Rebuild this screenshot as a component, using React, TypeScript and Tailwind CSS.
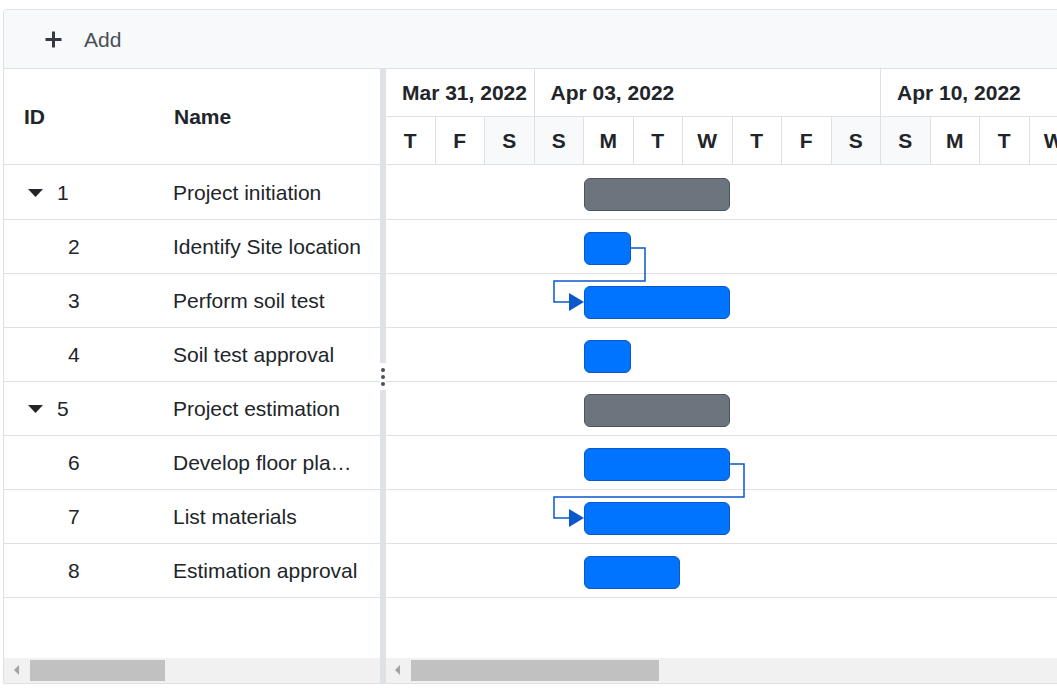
import { Fragment } from 'react'

type Task = { id: number; name: string; parent?: boolean; start: number; days: number }

const DAY = 49.5

const TASKS: Task[] = [
  { id: 1, name: 'Project initiation', parent: true, start: 4, days: 3 },
  { id: 2, name: 'Identify Site location', start: 4, days: 1 },
  { id: 3, name: 'Perform soil test', start: 4, days: 3 },
  { id: 4, name: 'Soil test approval', start: 4, days: 1 },
  { id: 5, name: 'Project estimation', parent: true, start: 4, days: 3 },
  { id: 6, name: 'Develop floor plan for estimation', start: 4, days: 3 },
  { id: 7, name: 'List materials', start: 4, days: 3 },
  { id: 8, name: 'Estimation approval', start: 4, days: 2 },
]

const FULL_WEEK = ['S', 'M', 'T', 'W', 'T', 'F', 'S']

const WEEKS = [
  { label: 'Mar 31, 2022', days: ['T', 'F', 'S'], weekend: [2] },
  { label: 'Apr 03, 2022', days: FULL_WEEK, weekend: [0, 6] },
  { label: 'Apr 10, 2022', days: FULL_WEEK, weekend: [0, 6] },
  { label: 'Apr 17, 2022', days: FULL_WEEK, weekend: [0, 6] },
]

function ScrollBar({ arrowLeft, thumbLeft, thumbWidth }: { arrowLeft: number; thumbLeft: number; thumbWidth: number }) {
  return (
    <div className="relative h-[25px] shrink-0 bg-[#f1f1f1]">
      <div
        className="absolute top-[7px] w-0 h-0 border-y-[5px] border-y-transparent border-r-[5px] border-r-[#a3a3a3]"
        style={{ left: arrowLeft }}
      />
      <div className="absolute top-[2px] h-[21px] bg-[#c1c1c1]" style={{ left: thumbLeft, width: thumbWidth }} />
    </div>
  )
}

export default function App() {
  return (
    <div className="w-[1057px] h-[691px] overflow-hidden bg-white pt-[9px] pl-[3px] font-['Liberation_Sans',Arial,sans-serif] text-[#212529]">
      <div className="w-[1140px] h-[675px] border border-[#dee2e6] rounded-t-[4px] flex flex-col overflow-hidden">
        {/* toolbar */}
        <div className="h-[59px] shrink-0 bg-[#f8f9fa] border-b border-[#dee2e6] flex items-center pl-[41px] pt-[1px]">
          <svg width="17" height="17" viewBox="0 0 17 17" className="shrink-0">
            <path d="M8.5 0.5v16M0.5 8.5h16" stroke="#343a40" strokeWidth="3" />
          </svg>
          <span className="ml-[22px] text-[21px] text-[#495057]">Add</span>
        </div>

        <div className="flex-1 flex min-h-0">
          {/* grid */}
          <div className="w-[376px] shrink-0 flex flex-col">
            <div className="h-[96px] shrink-0 border-b border-[#dee2e6] flex items-center text-[21px] font-bold">
              <div className="w-[150px] pl-[20px]">ID</div>
              <div className="pl-[20px]">Name</div>
            </div>
            <div className="pt-[1px]">
              {TASKS.map((t) => (
                <div key={t.id} className="h-[54px] border-b border-[#dee2e6] flex items-center text-[21px]">
                  <div className="w-[150px] shrink-0 flex items-center">
                    {t.parent ? (
                      <>
                        <svg width="15" height="8" viewBox="0 0 15 8" className="ml-[24px]">
                          <polygon points="0,0 15,0 7.5,8" fill="#212529" />
                        </svg>
                        <span className="ml-[14px]">{t.id}</span>
                      </>
                    ) : (
                      <span className="pl-[64px]">{t.id}</span>
                    )}
                  </div>
                  <div className="flex-1 min-w-0 pl-[19px] pr-[18px] truncate">{t.name}</div>
                </div>
              ))}
            </div>
            <div className="flex-1" />
            <ScrollBar arrowLeft={10} thumbLeft={26} thumbWidth={135} />
          </div>

          {/* splitter */}
          <div className="w-[6px] shrink-0 bg-[#dee2e6] flex flex-col">
            <div className="h-[294px]" />
            <div className="h-[27px] bg-white flex flex-col items-center justify-center gap-[3px]">
              <span className="w-[4px] h-[4px] rounded-full bg-[#495057]" />
              <span className="w-[4px] h-[4px] rounded-full bg-[#495057]" />
              <span className="w-[4px] h-[4px] rounded-full bg-[#495057]" />
            </div>
          </div>

          {/* chart */}
          <div className="flex-1 min-w-0 flex flex-col">
            <div className="h-[96px] shrink-0 flex border-b border-[#dee2e6]">
              {WEEKS.map((w) => (
                <div key={w.label} className="shrink-0 flex flex-col" style={{ width: w.days.length * DAY }}>
                  <div className="h-[48px] border-b border-r border-[#dee2e6] flex items-center pl-[16px] text-[21px] font-bold whitespace-nowrap">
                    {w.label}
                  </div>
                  <div className="flex-1 flex">
                    {w.days.map((d, i) => (
                      <div
                        key={i}
                        className={`w-[49.5px] shrink-0 border-r border-[#dee2e6] flex items-center justify-center text-[21px] font-bold ${
                          w.weekend.includes(i) ? 'bg-[#f8f9fa]' : 'bg-white'
                        }`}
                      >
                        {d}
                      </div>
                    ))}
                  </div>
                </div>
              ))}
            </div>
            <div className="relative pt-[1px]">
              {TASKS.map((t) => (
                <Fragment key={t.id}>
                  <div className="h-[54px] border-b border-[#dee2e6] flex items-start">
                    <div
                      className={`mt-[12px] h-[33px] rounded-[6px] border ${
                        t.parent ? 'bg-[#6c757d] border-[#4e555b]' : 'bg-[#0074ff] border-[#0a58ca]'
                      }`}
                      style={{ marginLeft: t.start * DAY - 0.5, width: t.days * DAY - 2.5 }}
                    />
                  </div>
                </Fragment>
              ))}
              <svg className="absolute left-0 top-0 pointer-events-none" width="400" height="400">
                <path d="M245 83H259V116H168V137H183" fill="none" stroke="#0a58ca" strokeWidth="1.5" />
                <polygon points="183,128 198,137 183,146" fill="#0a58ca" />
                <path d="M344 299H358V332H168V353H183" fill="none" stroke="#0a58ca" strokeWidth="1.5" />
                <polygon points="183,344 198,353 183,362" fill="#0a58ca" />
              </svg>
            </div>
            <div className="flex-1" />
            <ScrollBar arrowLeft={9} thumbLeft={25} thumbWidth={248} />
          </div>
        </div>
      </div>
    </div>
  )
}
